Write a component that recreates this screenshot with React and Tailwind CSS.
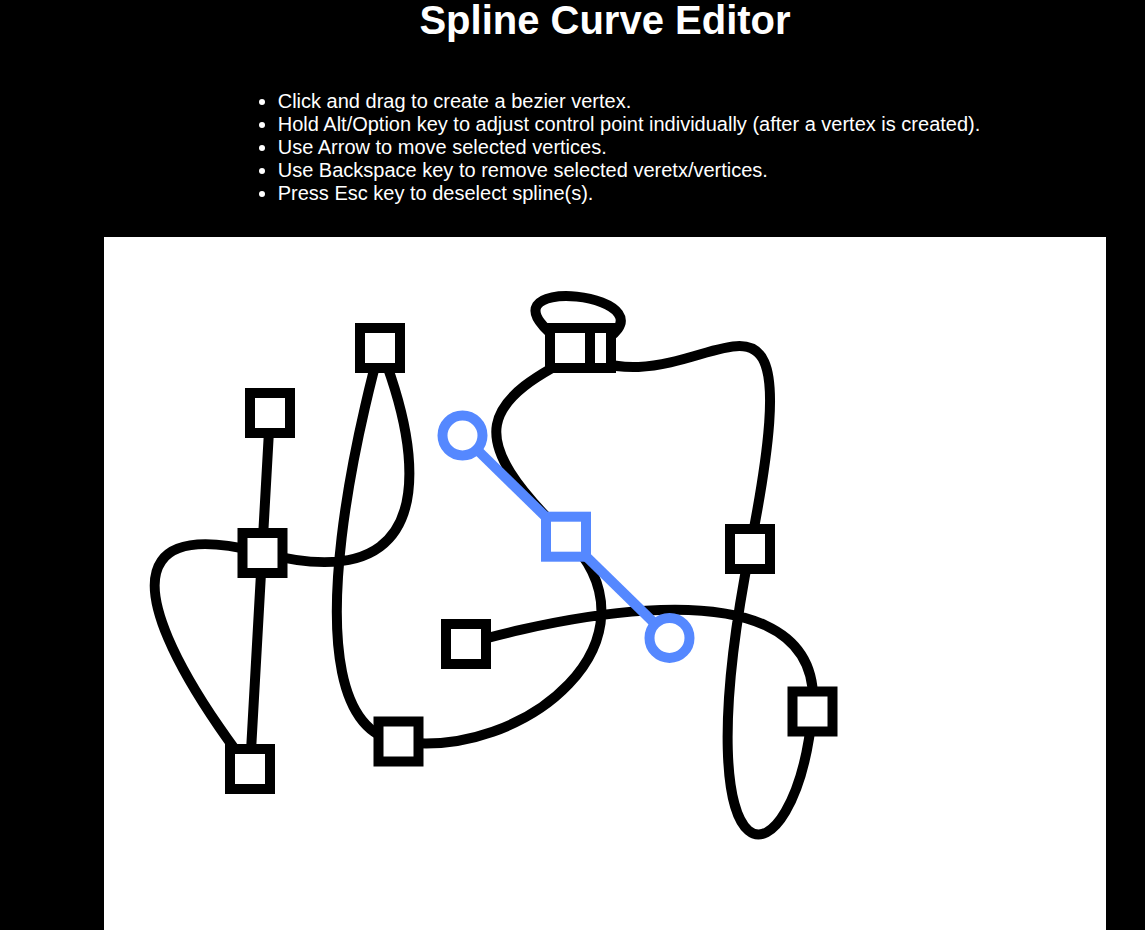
const INSTRUCTIONS = [
  'Click and drag to create a bezier vertex.',
  'Hold Alt/Option key to adjust control point individually (after a vertex is created).',
  'Use Arrow to move selected vertices.',
  'Use Backspace key to remove selected veretx/vertices.',
  'Press Esc key to deselect spline(s).',
];

// Each vertex: position plus the incoming and outgoing handle offsets.
const VERTICES = [
  { x: 270, y: 413, hin: [0, 0], hout: [0, 0] },
  { x: 250, y: 769, hin: [0, 0], hout: [0, 0] },
  { x: 262.5, y: 553, hin: [-235, -61], hout: [235, 61] },
  { x: 380, y: 348, hin: [0, 0], hout: [0, 0] },
  { x: 398.5, y: 741.5, hin: [-127, -19], hout: [127, 19] },
  { x: 566, y: 536.7, hin: [103.5, 101.2], hout: [-103.5, -101.2], selected: true },
  { x: 591, y: 348, hin: [-114, 54], hout: [114, -54] },
  { x: 570, y: 348, hin: [-124, -83], hout: [124, 83] },
  { x: 750, y: 549, hin: [70, -355], hout: [-70, 355] },
  { x: 812.5, y: 711.5, hin: [-17.5, 179], hout: [17.5, -179] },
  { x: 466, y: 644, hin: [0, 0], hout: [0, 0] },
];

function splinePath(vertices) {
  return vertices
    .map((v, i) => {
      if (i === 0) return `M${v.x} ${v.y}`;
      const p = vertices[i - 1];
      return `C${p.x + p.hout[0]} ${p.y + p.hout[1]} ${v.x + v.hin[0]} ${v.y + v.hin[1]} ${v.x} ${v.y}`;
    })
    .join(' ');
}

function Vertex({ vertex }) {
  const { x, y, hin, hout, selected } = vertex;
  const color = selected ? '#5588ff' : '#000000';
  const handles = selected ? [hin, hout] : [];
  return (
    <g stroke={color} strokeWidth="10" fill="#ffffff">
      {handles.map(([dx, dy]) => (
        <g key={`${dx},${dy}`}>
          <line x1={x} y1={y} x2={x + dx} y2={y + dy} />
          <circle cx={x + dx} cy={y + dy} r="20" />
        </g>
      ))}
      <rect x={x - 20} y={y - 20} width="40" height="40" />
    </g>
  );
}

export default function App() {
  return (
    <main className="flex min-h-screen flex-col bg-black pr-[39px] pl-[104px] font-['Liberation_Sans',Arial,sans-serif] text-white">
      <h1 className="text-center text-[40px] leading-10 font-bold">Spline Curve Editor</h1>
      <ul className="mx-auto mt-[50px] mb-8 w-fit list-disc pl-12 text-xl leading-[23px]">
        {INSTRUCTIONS.map((text) => (
          <li key={text}>{text}</li>
        ))}
      </ul>
      <div className="grow bg-white">
        <svg
          className="block h-auto w-full"
          viewBox="104 237 1002 693"
          role="img"
          aria-label="Spline canvas"
        >
          <path d={splinePath(VERTICES)} fill="none" stroke="#000000" strokeWidth="10" />
          {VERTICES.map((v) => (
            <Vertex key={`${v.x},${v.y}`} vertex={v} />
          ))}
        </svg>
      </div>
    </main>
  );
}
